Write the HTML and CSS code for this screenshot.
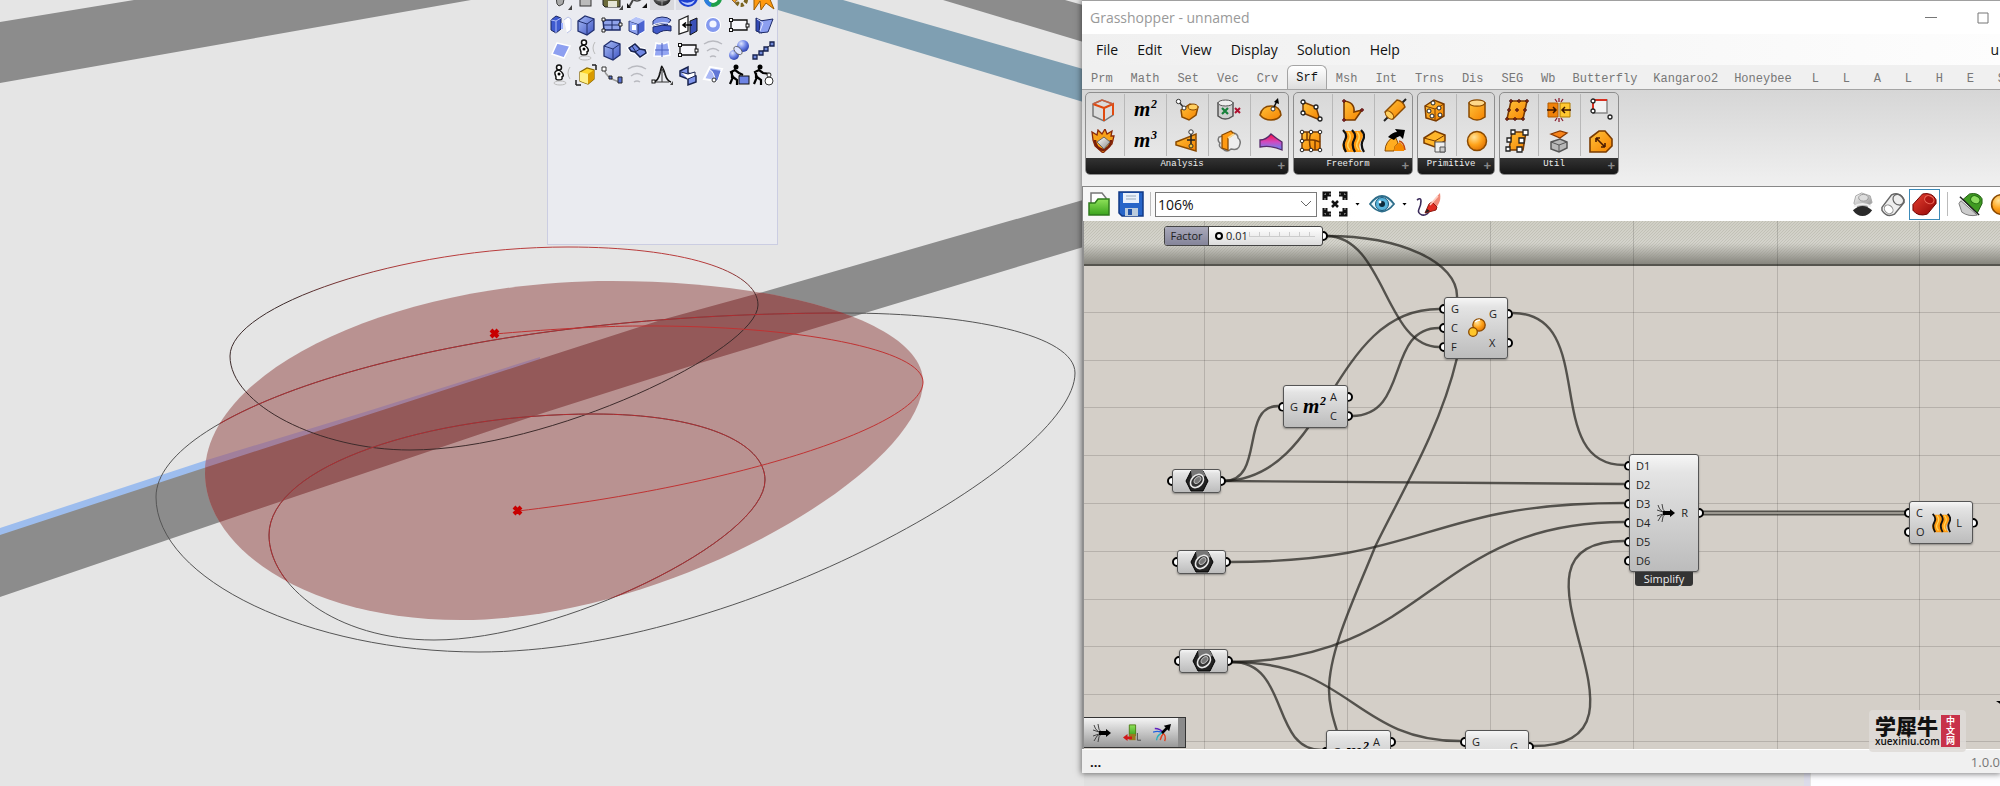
FILE: index.html
```html
<!DOCTYPE html>
<html lang="en">
<head>
<meta charset="utf-8">
<title>Grasshopper - unnamed</title>
<link rel="stylesheet" href="styles.css">
</head>
<body>
<svg class="defs" aria-hidden="true">
  <defs>
    <linearGradient id="gBlue" x1="0" y1="0" x2="1" y2="1"><stop offset="0" stop-color="#a9bdf5"/><stop offset="1" stop-color="#3f55c4"/></linearGradient>
    <linearGradient id="gOr" x1="0" y1="0" x2="1" y2="1"><stop offset="0" stop-color="#ffc23a"/><stop offset="1" stop-color="#f58200"/></linearGradient>
    <linearGradient id="gGrey" x1="0" y1="0" x2="1" y2="1"><stop offset="0" stop-color="#fff"/><stop offset="1" stop-color="#8c8c8c"/></linearGradient>
    <linearGradient id="gGreen" x1="0" y1="0" x2="0" y2="1"><stop offset="0" stop-color="#8fe25a"/><stop offset="1" stop-color="#3aa31c"/></linearGradient>
    <linearGradient id="gPink" x1="0" y1="0" x2="0" y2="1"><stop offset="0" stop-color="#ff0a3c"/><stop offset=".5" stop-color="#d04ac0"/><stop offset="1" stop-color="#5a8cf8"/></linearGradient>
    <radialGradient id="rOr" cx=".35" cy=".3" r=".8"><stop offset="0" stop-color="#ffe39a"/><stop offset=".5" stop-color="#ffa41c"/><stop offset="1" stop-color="#d96a00"/></radialGradient>
    <radialGradient id="rBlue" cx=".35" cy=".3" r=".8"><stop offset="0" stop-color="#dfe6ff"/><stop offset=".5" stop-color="#6d83e6"/><stop offset="1" stop-color="#2135a0"/></radialGradient>
    <radialGradient id="rDark" cx=".4" cy=".3" r=".8"><stop offset="0" stop-color="#aaa"/><stop offset="1" stop-color="#111"/></radialGradient>
    <linearGradient id="gRed" x1="0" y1="0" x2="1" y2="1"><stop offset="0" stop-color="#e84030"/><stop offset="1" stop-color="#8f0505"/></linearGradient>

    <symbol id="p-spot" viewBox="0 0 24 24"><path d="M6 2h11l-3 14-4 2-2-2z" fill="#aaa" stroke="#444"/><path d="M19 22h4v-5z" fill="#444"/></symbol>
    <symbol id="p-lock" viewBox="0 0 24 24"><rect x="6" y="7" width="11" height="11" fill="#bbb" stroke="#333"/></symbol>
    <symbol id="p-disk" viewBox="0 0 24 24"><path d="M3 2h17v17H5l-2-2z" fill="#6b6a3a" stroke="#222"/><rect x="8" y="13" width="9" height="6" fill="#e5e5d5"/><path d="M19 22h4v-5z" fill="#444"/></symbol>
    <symbol id="p-zoom" viewBox="0 0 24 24"><circle cx="12" cy="7" r="6" fill="#f6f6ff" stroke="#444" stroke-width="1.5"/><path d="M8 12l-4 7" stroke="#444" stroke-width="2"/><path d="M2 20h4l-4-5zM22 20h-5l5-5z" fill="#111"/></symbol>
    <symbol id="p-sphere-dark" viewBox="0 0 24 24"><rect width="24" height="22" fill="#d8d8dc"/><circle cx="12" cy="9" r="9" fill="url(#rDark)"/><path d="M3 10q9 6 18 0M12 0v18" fill="none" stroke="#999"/></symbol>
    <symbol id="p-sphere-blue" viewBox="0 0 24 24"><rect width="24" height="22" fill="#dcdde4"/><circle cx="12" cy="9" r="10" fill="#1c3fd0"/><path d="M5 13q7 4 14-1-2 5-7 5-5-1-7-4z" fill="#b5c7ff"/></symbol>
    <symbol id="p-ring" viewBox="0 0 24 24"><circle cx="12" cy="10" r="7" fill="#fff" stroke="#1fa04a" stroke-width="4"/><path d="M5 10a7 7 0 0 0 5 7" fill="none" stroke="#2e7ee0" stroke-width="4"/><path d="M19 10a7 7 0 0 0-5-7" fill="none" stroke="#2a3fd0" stroke-width="4"/></symbol>
    <symbol id="p-gear" viewBox="0 0 24 24"><circle cx="14" cy="12" r="5" fill="#eee" stroke="#7a6420" stroke-width="4" stroke-dasharray="3 2"/><path d="M2 9h9l-3 6z" fill="#f0a020" stroke="#864"/></symbol>
    <symbol id="p-arrow" viewBox="0 0 24 24"><path d="M2 4l12-1 8 4-5 2 5 12-8-6-5 7-1-9-6 9z" fill="#ff9a10" stroke="#9a5a00"/></symbol>

    <symbol id="p-split" viewBox="0 0 24 24"><path d="M2 7l5-4 5 2v11l-5 4-5-3z" fill="#3e5ad0" stroke="#1b2860"/><path d="M2 7l5 1v12M7 8l5-3" fill="none" stroke="#aebcf8"/><path d="M15 7l4-3 3 2v11l-4 3" fill="#fff" stroke="#b9c2e8"/><path d="M12 10h2v6h-2z" fill="#9cb1ff"/></symbol>
    <symbol id="p-box" viewBox="0 0 24 24"><path d="M4 8l7-5 9 3v11l-7 5-9-4z" fill="url(#gBlue)" stroke="#22306e" stroke-width="1.3"/><path d="M4 8l9 3v11M13 11l7-5" fill="none" stroke="#22306e"/></symbol>
    <symbol id="p-grid" viewBox="0 0 24 24"><path d="M3 7h17v10H4z" fill="#8fa2ea" stroke="#1d2a66" stroke-width="1.5"/><path d="M3 12h17M12 7v10" stroke="#1d2a66"/><g fill="#fff" stroke="#222"><path d="M2 5h3v3H2zM19 10h3v3h-3zM2 16h3v3H2z"/></g></symbol>
    <symbol id="p-box-face" viewBox="0 0 24 24"><path d="M4 8l7-4 9 3v11l-7 4-9-4z" fill="#4a62d0" stroke="#fff"/><path d="M4 8l9 3v11l-9-4z" fill="#8ea2ef" stroke="#22306e"/><path d="M4 8l7-4 9 3-7 4z" fill="#b5c3f8"/><rect x="7" y="12" width="4" height="5" fill="#fff"/></symbol>
    <symbol id="p-bend" viewBox="0 0 24 24"><path d="M3 8q3-4 9-4t9 3l-4 5q-7-3-14 0z" fill="#7f95ea" stroke="#1d2a66"/><path d="M3 14q9-3 18-1v5q-8-2-14 3l-4-2z" fill="#4059c8" stroke="#1d2a66"/><path d="M3 12q9-4 18-1" fill="none" stroke="#fff"/></symbol>
    <symbol id="p-door" viewBox="0 0 24 24"><path d="M3 7l9-4v15l-9 3z" fill="#fff" stroke="#222" stroke-width="1.3"/><path d="M14 8l7-3v13l-7 4z" fill="#3a50b8" stroke="#111"/><path d="M8 12h8M10 9.500l-3 2.500 3 2.500" fill="none" stroke="#000" stroke-width="1.600"/></symbol>
    <symbol id="p-ball" viewBox="0 0 24 24"><circle cx="12" cy="12" r="8" fill="#fff"/><circle cx="12" cy="12" r="7" fill="#8499ee"/><circle cx="12" cy="11" r="3.6" fill="#f4f6ff"/></symbol>
    <symbol id="p-rect" viewBox="0 0 24 24"><path d="M4 7h16v10H4z" fill="#f7f7fb" stroke="#111" stroke-width="1.3"/><g fill="#fff" stroke="#111"><rect x="2.500" y="5.500" width="3" height="3"/><rect x="19" y="11" width="3" height="3"/><rect x="2.500" y="15.500" width="3" height="3"/></g></symbol>
    <symbol id="p-planes" viewBox="0 0 24 24"><path d="M4 5l6 3v12l-6-2z" fill="#3249b5" stroke="#1d2a66"/><path d="M8 8l13-2-5 13-9 1z" fill="#8c9ff0" stroke="#1d2a66"/><path d="M5 6l6 4-3 8" fill="none" stroke="#dfe5ff"/></symbol>
    <symbol id="p-plane" viewBox="0 0 24 24"><path d="M8 5l13 3-6 12-12-4z" fill="#8d9ff0" stroke="#fff" stroke-width="1.500"/></symbol>
    <symbol id="p-figure" viewBox="0 0 24 24"><g fill="#fff" stroke="#111" stroke-width="1.500"><circle cx="10" cy="4.500" r="2.500"/><path d="M10 7q-5 1-4 4t1 3q-1 3 3 3t3-3q2-1 1-3t-4-4z"/></g><circle cx="10" cy="11" r="1.500"/><ellipse cx="11" cy="20" rx="6" ry="2" fill="none" stroke="#bbb"/><path d="M21 4q-4 6 0 12" fill="none" stroke="#bbb"/></symbol>
    <symbol id="p-surfs" viewBox="0 0 24 24"><path d="M3 10l7-4 4 4 5 1 3 4-7 4-5-4-4-1z" fill="#6c84e0" stroke="#fff" stroke-width="2.500"/><path d="M4 10l6-4 5 5 5 1 1 3-6 4-5-5-4-1z" fill="#7188e4" stroke="#18234f" stroke-width="1.500"/><path d="M10 14l5-3M7 8l4 6" stroke="#18234f"/></symbol>
    <symbol id="p-patch" viewBox="0 0 24 24"><path d="M6 5q6 2 12-1l2 13q-8 2-16 1z" fill="#94a6f2" stroke="#fff" stroke-width="1.500"/><path d="M12 5v14M5 12h14" stroke="#4c61c0"/></symbol>
    <symbol id="p-arcs" viewBox="0 0 24 24"><path d="M3 6q9-6 18 0M6 13q6-5 12 0M9 19q3-2 6 0" fill="none" stroke="#b9bac0" stroke-width="1.500"/></symbol>
    <symbol id="p-balls" viewBox="0 0 24 24"><circle cx="7" cy="17" r="5" fill="url(#rBlue)"/><circle cx="16" cy="8" r="6" fill="url(#rBlue)"/><ellipse cx="11" cy="12.500" rx="5" ry="3" transform="rotate(45 11 12.500)" fill="#dfe5ff" stroke="#555" stroke-width=".8"/></symbol>
    <symbol id="p-steps" viewBox="0 0 24 24"><path d="M3 19L21 5" stroke="#555"/><g fill="#7088d8" stroke="#18234f" stroke-width="1.300"><path d="M1 17h4v4H1zM7 13h4v4H7zM12 9h4v4h-4zM18 4h4v4h-4z"/></g></symbol>
    <symbol id="p-ybox" viewBox="0 0 24 24"><path d="M2 22v-5M2 22h5M22 2v5M22 2h-4" stroke="#222" stroke-width="1.500"/><path d="M6 9l7-4 7 2v9l-6 5-8-3z" fill="#ffd62a" stroke="#8a6a00" stroke-width="1.300"/><path d="M6 9l8 2v10l-8-3z" fill="#fff08a"/><path d="M14 11l6-4v9l-6 5z" fill="#d99a00"/></symbol>
    <symbol id="p-arcpts" viewBox="0 0 24 24"><path d="M4 6q2 9 15 13" fill="none" stroke="#999" stroke-width="1.500"/><g fill="#fff" stroke="#333"><path d="M2 4h4v4H2z"/></g><g fill="#5870d0" stroke="#222"><path d="M9 13h3v3H9zM18 14h4v6h-4z"/></g></symbol>
    <symbol id="p-peak" viewBox="0 0 24 24"><path d="M3 19q5 0 7-9t2-6q1 0 3 7t6 8" fill="none" stroke="#111" stroke-width="1.600"/><path d="M12 7v12M9 11l3-5 3 5M5 19h14" fill="none" stroke="#333"/><rect x="2" y="17" width="3" height="3" fill="#fff" stroke="#111"/><path d="M20 22h3v-4z" fill="#444"/></symbol>
    <symbol id="p-zed" viewBox="0 0 24 24"><path d="M4 8l8-4v6l8 3v6l-8 3v-6l-8-3z" fill="#7f94ea" stroke="#18234f" stroke-width="1.500"/><path d="M5 9l7 2 7-2v4l-7 3" fill="#fff" stroke="#18234f"/></symbol>
    <symbol id="p-fold" viewBox="0 0 24 24"><path d="M9 4l12 2-6 12-12-2z" fill="#aab8f5" stroke="#fff" stroke-width="2"/><path d="M8 6q6 3 6 13l3-2 3-9" fill="#6177d6" stroke="#fff"/><circle cx="13" cy="17" r="2" fill="#fff" stroke="#333"/></symbol>
    <symbol id="p-man-box" viewBox="0 0 24 24"><circle cx="9" cy="4" r="2.500"/><path d="M3 21l3-7-2-5 4-2 4 3 4 2M6 14l4 3v5M5 8v7" fill="none" stroke="#000" stroke-width="2.200"/><rect x="12" y="13" width="10" height="8" fill="#6e84e4" stroke="#111"/><path d="M12 13l3-2" stroke="#111"/></symbol>
    <symbol id="p-man-ball" viewBox="0 0 24 24"><circle cx="8" cy="4" r="2.500"/><path d="M2 21l3-7-2-5 4-2 4 3 8 1M5 14l4 3v5M4 8v7" fill="none" stroke="#000" stroke-width="2.200"/><circle cx="17" cy="18" r="4" fill="#fff" stroke="#333"/><circle cx="17" cy="12" r="2" fill="#fff" stroke="#333"/></symbol>

    <symbol id="r-frame" viewBox="0 0 24 24"><path d="M2 6l9-4 11 4v11l-9 6-11-5z" fill="#dcdcdc" stroke="#777" stroke-width="1.500"/><path d="M13 10v13M13 10l9-4v11M2 6l11 4" fill="none" stroke="#e04a10" stroke-width="2"/><path d="M2 6l9-4 11 4" fill="none" stroke="#c96040" stroke-width="1.500"/></symbol>
    <symbol id="r-flame" viewBox="0 0 24 24"><path d="M2 11L1 3l5 3 1-5 4 4 3-5 2 5 5-3-1 5 3 0-2 8-9 9-8-7z" fill="#f7a21a" stroke="#8a2a0a" stroke-width="1.300"/><path d="M4 11q0 8 8 10 8-2 8-10" fill="none" stroke="#7b1f08" stroke-width="2.500"/><path d="M6 13l7-5 6 5-6 7z" fill="url(#gGrey)" stroke="#666"/></symbol>
    <symbol id="r-m2" viewBox="0 0 28 24"><text x="3" y="18" class="glyph-m">m</text><text x="20" y="10" class="glyph-exp">2</text></symbol>
    <symbol id="r-m3" viewBox="0 0 28 24"><text x="3" y="18" class="glyph-m">m</text><text x="20" y="10" class="glyph-exp">3</text></symbol>
    <symbol id="r-eval" viewBox="0 0 24 24"><path d="M6 12l9-6 8 3-2 8-7 5-7-3z" fill="url(#gOr)" stroke="#8a4a00" stroke-width="1.500"/><ellipse cx="18" cy="9" rx="5" ry="3" fill="#ffcf60" stroke="#8a4a00"/><path d="M4 4l5 6" stroke="#333" stroke-width="1.500"/><circle cx="3.500" cy="3.500" r="2.200" fill="#fff" stroke="#333"/><circle cx="9" cy="10" r="2" fill="#fff" stroke="#333"/></symbol>
    <symbol id="r-cone" viewBox="0 0 24 24"><path d="M1 13l20-8v17L1 16z" fill="url(#gOr)" stroke="#8a4a00" stroke-width="1.500"/><path d="M16 3v13M12 11h8" stroke="#222" stroke-width="1.500"/><circle cx="16" cy="3" r="2.200" fill="#fff" stroke="#333"/><circle cx="16" cy="17" r="2" fill="#fc3" stroke="#333"/></symbol>
    <symbol id="r-cyl-x" viewBox="0 0 24 24"><path d="M1 5v13q7 6 15 0V5z" fill="#cfcfcf" stroke="#555" stroke-width="1.500"/><ellipse cx="8.500" cy="5" rx="7.500" ry="3" fill="#eee" stroke="#555"/><path d="M5 10l6 6M11 10l-6 6" stroke="#16803a" stroke-width="2.200"/><path d="M18 10l5 5M23 10l-5 5" stroke="#b01030" stroke-width="2"/></symbol>
    <symbol id="r-brep" viewBox="0 0 24 24"><path d="M2 8q-2 4 1 6-2 4 3 6 4 4 8 0 8 2 9-5 1-4-2-6 0-5-6-5z" fill="#eee" stroke="#777" stroke-width="1.500"/><path d="M5 6l9-4 3 3-6 4v12l-6-2z" fill="#ff9a12" stroke="#8a4a00" stroke-width="1.300"/><path d="M11 9l6-4" stroke="#ffd98a" stroke-width="2"/></symbol>
    <symbol id="r-dome" viewBox="0 0 24 24"><path d="M1 17q2-9 11-9t10 9q-3 5-10 5T1 17z" fill="url(#gOr)" stroke="#8a4a00" stroke-width="1.500"/><path d="M14 11l4-8" stroke="#111" stroke-width="1.500"/><path d="M19 0l1 6-5-2z"/><circle cx="14" cy="11" r="2" fill="#fff" stroke="#333"/></symbol>
    <symbol id="r-curv" viewBox="0 0 24 24"><path d="M1 11q6 0 11-6 6 5 11 8v8q-10-5-22-3z" fill="url(#gPink)" stroke="#552a6a" stroke-width="1.300"/></symbol>
    <symbol id="r-4pt" viewBox="0 0 24 24"><path d="M4 4l13 5 4 13L4 15z" fill="url(#gOr)" stroke="#7a3b00" stroke-width="1.500"/><g fill="#fff" stroke="#222" stroke-width="1.300"><circle cx="4" cy="4" r="2"/><circle cx="17" cy="9" r="2"/><circle cx="21" cy="21" r="2"/><circle cx="4" cy="15" r="2"/></g></symbol>
    <symbol id="r-sail" viewBox="0 0 24 24"><path d="M3 3q11 1 10 11l8-2-7 10H3z" fill="url(#gOr)" stroke="#7a3b00" stroke-width="1.600"/><g fill="#a33" stroke="#511"><circle cx="3" cy="3" r="1.300"/><circle cx="3" cy="22" r="1.300"/><circle cx="21" cy="12" r="1.300"/></g></symbol>
    <symbol id="r-pipe" viewBox="0 0 24 24"><path d="M1 23L23 1" stroke="#222" stroke-width="2"/><path d="M2 14L14 2q6 1 8 7L10 21q-6-1-8-7z" fill="url(#gOr)" stroke="#8a4a00" stroke-width="1.400"/><ellipse cx="6.500" cy="17" rx="3" ry="5" transform="rotate(-45 6.500 17)" fill="#ffd060" stroke="#8a4a00"/></symbol>
    <symbol id="r-net" viewBox="0 0 24 24"><path d="M3 3h18v18H3z" fill="url(#gOr)" stroke="#7a3b00" stroke-width="1.500"/><path d="M12 3q-3 9 0 18M3 12q9-3 18 1M8 3v8M16 12v9" fill="none" stroke="#7a3b00" stroke-width="1.500"/><g fill="#fff" stroke="#222"><circle cx="3" cy="3" r="1.800"/><circle cx="12" cy="3" r="1.800"/><circle cx="21" cy="3" r="1.800"/><circle cx="3" cy="21" r="1.800"/><circle cx="12" cy="21" r="1.800"/><circle cx="21" cy="21" r="1.800"/><circle cx="3" cy="12" r="1.800"/></g></symbol>
    <symbol id="r-loft" viewBox="0 0 24 24"><path d="M2 2q5 5 1 10t1 11h17q-5-5-1-11t0-10z" fill="#ff9a10"/><path d="M2 1q5 5 2 10t1 12M11 1q5 5 2 10t1 12M20 1q5 5 2 10t1 12" fill="none" stroke="#111" stroke-width="2.200"/><path d="M7 3q4 4 1 9t1 9M16 3q4 4 1 9t1 9" fill="none" stroke="#ffd65a" stroke-width="1.500"/></symbol>
    <symbol id="r-sweep" viewBox="0 0 24 24"><path d="M2 22Q2 12 12 7l3 7q-4 3-4 8z" fill="#ffad20" stroke="#8a4a00"/><path d="M11 22q0-6 6-9l5 6-1 3z" fill="#f58a00"/><path d="M5 8q5-5 9-5l-2-3 10 1-2 9-3-3q-4 1-6 4z" fill="#000"/><path d="M16 12q5 1 6 9" fill="none" stroke="#c24a10" stroke-width="1.500"/></symbol>
    <symbol id="r-dice" viewBox="0 0 24 24"><path d="M2 8l9-6 10 4v12l-8 5-10-3z" fill="url(#gOr)" stroke="#7a3b00" stroke-width="1.500"/><path d="M2 8l10 3v11M12 11l9-5" fill="none" stroke="#7a3b00"/><g fill="#fff" stroke="#222"><circle cx="10" cy="5" r="2"/><circle cx="6" cy="13" r="2"/><circle cx="16" cy="10" r="2"/><circle cx="17" cy="17" r="2"/><circle cx="9" cy="18" r="2"/></g></symbol>
    <symbol id="r-cyl" viewBox="0 0 24 24"><path d="M4 5v14q8 6 16 0V5z" fill="url(#gOr)" stroke="#8a4a00" stroke-width="1.500"/><ellipse cx="12" cy="5" rx="8" ry="3.200" fill="#ffd98a" stroke="#8a4a00" stroke-width="1.300"/></symbol>
    <symbol id="r-plane" viewBox="0 0 24 24"><path d="M1 9l11-7 10 4v6l-10 6L1 14z" fill="#ffb52a" stroke="#7a3b00" stroke-width="1.500"/><path d="M1 9l11 3 10-6M12 12v5" fill="none" stroke="#7a3b00"/><path d="M12 13h10v10H12z" fill="#eee" stroke="#555"/><path d="M17 18h5v5h-5z" fill="#ccc" stroke="#555"/></symbol>
    <symbol id="r-sphere" viewBox="0 0 24 24"><circle cx="12" cy="12" r="9.500" fill="url(#rOr)" stroke="#8a4a00" stroke-width="1.500"/></symbol>
    <symbol id="r-div" viewBox="0 0 24 24"><path d="M6 3h16l-4 18H2z" fill="url(#gOr)" stroke="#7a3b00" stroke-width="1.600"/><g fill="#b04010" stroke="#411"><circle cx="6" cy="3" r="1.300"/><circle cx="14" cy="3" r="1.300"/><circle cx="22" cy="3" r="1.300"/><circle cx="4" cy="12" r="1.300"/><circle cx="12" cy="12" r="1.300"/><circle cx="20" cy="12" r="1.300"/><circle cx="2" cy="21" r="1.300"/><circle cx="10" cy="21" r="1.300"/><circle cx="18" cy="21" r="1.300"/></g></symbol>
    <symbol id="r-frames" viewBox="0 0 24 24"><path d="M7 3h14l-3 18H4z" fill="url(#gOr)" stroke="#7a3b00" stroke-width="1.600"/><g fill="#fff" stroke="#222" stroke-width="1.300"><path d="M6 1h4v4H6zM18 1h5v5h-5zM2 9h4v4H2zM14 9h5v5h-5zM1 18h4v4H1zM12 18h5v5h-5z"/></g></symbol>
    <symbol id="r-join" viewBox="0 0 24 24"><path d="M1 5h10v14H1z" fill="#f0820a" stroke="#b05a00"/><path d="M13 5h10v14H13z" fill="#ffc832" stroke="#b07a00"/><path d="M0 12h8M24 12h-8M6 9l3 3-3 3M18 9l-3 3 3 3" fill="none" stroke="#3a1500" stroke-width="1.500"/><path d="M12 0v4M8 1l2 3M16 1l-2 3M12 24v-4M8 23l2-3M16 23l-2-3" stroke="#8a2030" stroke-width="1.300"/></symbol>
    <symbol id="r-cap" viewBox="0 0 24 24"><path d="M4 13l9-3 7 3v6l-8 4-8-3z" fill="#b8b8b8" stroke="#555" stroke-width="1.500"/><path d="M4 13l8 3v7M12 16l8-3" fill="none" stroke="#555"/><path d="M4 5l9-3 7 2-7 5z" fill="#f7841a" stroke="#8a3a00" stroke-width="1.300"/></symbol>
    <symbol id="r-edges" viewBox="0 0 24 24"><path d="M4 2h14v13H4z" fill="#f2f2f2" stroke="#888" stroke-width="1.500"/><path d="M18 2H4v12" fill="none" stroke="#d83020" stroke-width="2"/><g fill="#fff" stroke="#222" stroke-width="1.300"><circle cx="4" cy="3" r="2"/><circle cx="4" cy="13" r="2"/><circle cx="21" cy="19" r="2"/></g></symbol>
    <symbol id="r-tag" viewBox="0 0 24 24"><path d="M1 9l9-7h6l7 8v7l-6 6H1z" fill="url(#gOr)" stroke="#7a3b00" stroke-width="1.600"/><path d="M7 9l9 9M7 9v4M7 9h4M16 18v-4M16 18h-4" fill="none" stroke="#4a1a00" stroke-width="1.600"/></symbol>

    <symbol id="t-open" viewBox="0 0 24 26"><path d="M4 12V2h11l4 5v6" fill="#fff" stroke="#777" stroke-width="1.500"/><path d="M2 12h6l3-4h11v16H2z" fill="url(#gGreen)" stroke="#2f7a1c" stroke-width="1.500"/></symbol>
    <symbol id="t-save" viewBox="0 0 26 26"><path d="M1 1h24v24H4l-3-3z" fill="#2765c8" stroke="#123a85" stroke-width="1.500"/><path d="M5 2h16v10H5z" fill="#e8f0fb"/><path d="M8 5h10M8 8h10" stroke="#9ab"/><path d="M7 17h13v8H7z" fill="#bcd"/><path d="M10 18h4v6h-4z" fill="#2253a8"/></symbol>
    <symbol id="t-ext" viewBox="0 0 26 26"><path d="M3 9V3h6M17 3h6v6M23 17v6h-6M9 23H3v-6" fill="none" stroke="#111" stroke-width="5"/><path d="M3 9V3h6M17 3h6v6M23 17v6h-6M9 23H3v-6" fill="none" stroke="#aaa" stroke-width="1" stroke-dasharray="2 3"/><path d="M10 10l6 6M16 10l-6 6" stroke="#111" stroke-width="2.500"/></symbol>
    <symbol id="t-eye" viewBox="0 0 26 20"><path d="M1 10q12-16 24 0-12 15-24 0z" fill="#e9f6fb" stroke="#2d6d8a" stroke-width="1.800"/><circle cx="13" cy="10" r="6.500" fill="#58b4dc" stroke="#1b587a"/><circle cx="13" cy="10" r="3" fill="#0b2a3c"/><circle cx="11" cy="8" r="1.400" fill="#fff"/></symbol>
    <symbol id="t-pen" viewBox="0 0 26 26"><path d="M1 9q4-3 4 1t-2 8 3 6q5 1 8-5" fill="none" stroke="#3a2a5a" stroke-width="1.600"/><path d="M14 13L24 2q1 6-1 10l-4 7z" fill="#f08a78"/><path d="M9 22l4-9 3-2 5 5-1 3z" fill="#e02a20" stroke="#8f1a10"/><path d="M9 22l2-4 3 2z" fill="#222"/><path d="M14 14L22 5" stroke="#ffd0c4" stroke-width="1.500"/></symbol>
    <symbol id="t-hidden" viewBox="0 0 24 26"><path d="M3 12l2-8 6-3 9 3 2 7-6 5H8z" fill="url(#gGrey)" stroke="#aaa"/><ellipse cx="13" cy="6" rx="5" ry="3.500" fill="#ddd" stroke="#999"/><path d="M2 19q10-9 20 0-4 6-10 6T2 19z" fill="#2a2a2a"/><path d="M3 15q9-5 18 0" fill="none" stroke="#eee" stroke-width="2"/></symbol>
    <symbol id="t-wire" viewBox="0 0 26 26"><path d="M1 16L11 3q8-4 13 5v3L14 23q-8 4-13-4z" fill="#eee" stroke="#666" stroke-width="1.500"/><ellipse cx="18" cy="8" rx="5" ry="6" transform="rotate(-45 18 8)" fill="none" stroke="#666" stroke-width="1.300"/><ellipse cx="8" cy="18" rx="4" ry="5" transform="rotate(-45 8 18)" fill="#fff" stroke="#888"/></symbol>
    <symbol id="t-shade" viewBox="0 0 26 26"><path d="M1 13L11 2q10-2 14 6v4L16 23q-10 3-15-4z" fill="url(#gRed)" stroke="#6d0000"/><ellipse cx="18" cy="8" rx="5" ry="4" transform="rotate(25 18 8)" fill="#b01512" stroke="#f07060"/></symbol>
    <symbol id="t-sel" viewBox="0 0 26 26"><path d="M1 12l2-3 17 15q-9 2-16-3z" fill="#ccc" stroke="#777"/><path d="M5 8L12 2q9-2 13 5v5l-5 10z" fill="#3f9a22" stroke="#1f5a10"/><ellipse cx="18" cy="8" rx="5" ry="4" transform="rotate(25 18 8)" fill="#8cdc60" stroke="#1f6a10"/><path d="M2 5l20 19" stroke="#222" stroke-width="1.500"/></symbol>

    <symbol id="n-scale" viewBox="0 0 18 20"><circle cx="11" cy="7" r="6.200" fill="url(#rOr)" stroke="#8a4a00" stroke-width="1.300"/><circle cx="5" cy="14" r="4.300" fill="#ffc62a" stroke="#8a4a00" stroke-width="1.300"/><path d="M7 4q2-2 5-2" stroke="#fff" stroke-width="1.500" fill="none"/></symbol>
    <symbol id="n-merge" viewBox="0 0 18 18"><path d="M1 1q2 7 8 8Q3 11 1 17M0 6l9 3-9 3M5 0q0 6 4 9-4 3-4 9" fill="none" stroke="#444" stroke-width="1"/><path d="M6 7h7V5l5 4-5 4v-2H6z"/></symbol>
    <symbol id="n-hex" viewBox="0 0 24 22"><path d="M6 1h12l5 10-5 10H6L1 11z" fill="#222" stroke="#000"/><path d="M6 1h12l3 5-14 2z" fill="#777"/><ellipse cx="12" cy="11" rx="7.500" ry="5.500" transform="rotate(-45 12 11)" fill="#333" stroke="#e8e8e8" stroke-width="1.600"/><ellipse cx="12.500" cy="10" rx="4" ry="2.500" transform="rotate(-45 12.500 10)" fill="#777" stroke="#bbb"/></symbol>
    <symbol id="w-jump" viewBox="0 0 20 20"><path d="M7 1h7v12H7z" fill="url(#gGreen)" stroke="#4a7a10"/><path d="M7 11h7v7H7z" fill="#9a7a20"/><path d="M0 15l5-4v3h5v3H5v2z" fill="#d01818"/><path d="M16 10v8h4" fill="none" stroke="#444"/></symbol>
    <symbol id="w-split" viewBox="0 0 20 20"><path d="M0 9q6-2 12 1" fill="none" stroke="#2060e0" stroke-width="1.500"/><path d="M2 5q6 0 10 5" fill="none" stroke="#6020c0" stroke-width="1.500"/><path d="M4 18q0-6 8-9" fill="none" stroke="#20b0c0" stroke-width="1.500"/><path d="M13 19q2-6-2-9M8 18q1-5 4-8" fill="none" stroke="#e04020" stroke-width="1.500"/><path d="M9 9l5-5-2-2 8-2-2 8-2-2-5 5z"/></symbol>
  </defs>
</svg>

<main class="desktop">
  <svg class="scene" aria-label="Perspective viewport" role="img">
    <defs>
      <path id="disc" d="M205 473C205 368 400 281 611 281C790 281 923 325 923 382C923 470 670 620 461 620C310 620 205 550 205 473Z"/>
      <path id="outer" d="M156 497C156 410 440 313 843 313C970 313 1075 335 1075 373C1075 460 740 652 479 652C310 652 156 580 156 497Z"/>
      <path id="lower" d="M269 535C269 465 430 414 594 414C700 414 765 442 765 480C765 540 560 640 434 640C335 640 269 585 269 535Z"/>
      <clipPath id="inDisc"><use href="#disc"/></clipPath>
      <linearGradient id="fade" gradientUnits="userSpaceOnUse" x1="0" y1="262" x2="0" y2="300"><stop offset="0" stop-color="#b83c3c"/><stop offset="1" stop-color="#3c2a2a"/></linearGradient>
    </defs>
    <path d="M0 22L134 0H471L0 83Z" fill="#8c8c8c"/>
    <path d="M740 0H843L1090 71V104L778 10Z" fill="#7f9fb2"/>
    <path d="M943 0H1065L1090 7V44Z" fill="#8c8c8c"/>
    <path d="M0 528L207 460L365 412L540 357V360L207 468L0 536Z" fill="#9dbdee"/>
    <path d="M0 535L207 467L540 359L661 320L763 292L943 240L1090 198V245L865 313L697 364L540 414L217 523L0 597Z" fill="#8c8c8c"/>
    <use href="#disc" fill="#b99291"/>
    <g clip-path="url(#inDisc)">
      <path d="M0 528L207 460L365 412L540 357V360L207 468L0 536Z" fill="#a17f9c"/>
      <path d="M0 535L207 467L540 359L661 320L763 292L943 240L1090 198V245L865 313L697 364L540 414L217 523L0 597Z" fill="#945959"/>
    </g>
    <g fill="none">
      <path d="M230 356C230 306 400 247 568 247C680 247 758 270 758 305C758 350 550 450 410 450C320 450 230 405 230 356Z" stroke="url(#fade)"/>
      <use href="#outer" stroke="#555"/>
      <use href="#lower" stroke="#555"/>
      <g clip-path="url(#inDisc)" stroke="#b02c30"><use href="#outer"/><use href="#lower"/></g>
      <path d="M495 334C540 330 600 326 640 326C800 325 923 350 923 382C923 425 740 485 518 511" stroke="#c03232"/>
      <path d="M491 330l7 7m0-7l-7 7M514 507l7 7m0-7l-7 7" stroke="#c80000" stroke-width="4"/>
    </g>
    <path d="M1084 773H1804V786H1084Z" fill="#e0e0e0"/>
    <path d="M1804 773H1810V786H1804Z" fill="#dcdcea"/>
    <path d="M1811 773H2400V786H1811Z" fill="#fdfdff"/>
  </svg>

  <section class="palette" aria-label="Modeling tools">
    <div class="palette-grid">
      <button type="button" aria-label="Spotlight"><svg><use href="#p-spot"/></svg></button>
      <button type="button" aria-label="Lock"><svg><use href="#p-lock"/></svg></button>
      <button type="button" aria-label="Save"><svg><use href="#p-disk"/></svg></button>
      <button type="button" aria-label="Zoom"><svg><use href="#p-zoom"/></svg></button>
      <button type="button" aria-label="Wireframe"><svg><use href="#p-sphere-dark"/></svg></button>
      <button type="button" aria-label="Shaded"><svg><use href="#p-sphere-blue"/></svg></button>
      <button type="button" aria-label="Color wheel"><svg><use href="#p-ring"/></svg></button>
      <button type="button" aria-label="Options"><svg><use href="#p-gear"/></svg></button>
      <button type="button" aria-label="Explode"><svg><use href="#p-arrow"/></svg></button>
      <button type="button" aria-label="Split solid"><svg><use href="#p-split"/></svg></button>
      <button type="button" aria-label="Box"><svg><use href="#p-box"/></svg></button>
      <button type="button" aria-label="Surface grid"><svg><use href="#p-grid"/></svg></button>
      <button type="button" aria-label="Extract face"><svg><use href="#p-box-face"/></svg></button>
      <button type="button" aria-label="Bend"><svg><use href="#p-bend"/></svg></button>
      <button type="button" aria-label="Move face"><svg><use href="#p-door"/></svg></button>
      <button type="button" aria-label="Sphere"><svg><use href="#p-ball"/></svg></button>
      <button type="button" aria-label="Rectangle"><svg><use href="#p-rect"/></svg></button>
      <button type="button" aria-label="Planes"><svg><use href="#p-planes"/></svg></button>
      <button type="button" aria-label="Plane"><svg><use href="#p-plane"/></svg></button>
      <button type="button" aria-label="Rotate figure"><svg><use href="#p-figure"/></svg></button>
      <button type="button" aria-label="Solid box"><svg><use href="#p-box"/></svg></button>
      <button type="button" aria-label="Surfaces"><svg><use href="#p-surfs"/></svg></button>
      <button type="button" aria-label="Patch"><svg><use href="#p-patch"/></svg></button>
      <button type="button" aria-label="Corner rectangle"><svg><use href="#p-rect"/></svg></button>
      <button type="button" aria-label="Arcs"><svg><use href="#p-arcs"/></svg></button>
      <button type="button" aria-label="Scale spheres"><svg><use href="#p-balls"/></svg></button>
      <button type="button" aria-label="Points"><svg><use href="#p-steps"/></svg></button>
      <button type="button" aria-label="Orient figure"><svg><use href="#p-figure"/></svg></button>
      <button type="button" aria-label="Bounding box"><svg><use href="#p-ybox"/></svg></button>
      <button type="button" aria-label="Arc points"><svg><use href="#p-arcpts"/></svg></button>
      <button type="button" aria-label="Arc array"><svg><use href="#p-arcs"/></svg></button>
      <button type="button" aria-label="Curve peak"><svg><use href="#p-peak"/></svg></button>
      <button type="button" aria-label="Fold planes"><svg><use href="#p-zed"/></svg></button>
      <button type="button" aria-label="Flow"><svg><use href="#p-fold"/></svg></button>
      <button type="button" aria-label="Push box"><svg><use href="#p-man-box"/></svg></button>
      <button type="button" aria-label="Push sphere"><svg><use href="#p-man-ball"/></svg></button>
    </div>
  </section>

  <section class="window" aria-label="Grasshopper">
    <header class="titlebar">
      <h1>Grasshopper - unnamed</h1>
      <div class="caption">
        <button type="button" aria-label="Minimize"><svg viewBox="0 0 12 12"><path d="M0 5.500h12"/></svg></button>
        <button type="button" aria-label="Maximize"><svg viewBox="0 0 12 12"><path d="M1 1h10v10H1z"/></svg></button>
      </div>
    </header>
    <nav class="menubar">
      <a href="#">File</a><a href="#">Edit</a><a href="#">View</a><a href="#">Display</a><a href="#">Solution</a><a href="#">Help</a>
      <a class="doc" href="#">u</a>
    </nav>
    <nav class="tabs">
      <button type="button">Prm</button><button type="button">Math</button><button type="button">Set</button><button type="button">Vec</button><button type="button">Crv</button><button type="button" class="active">Srf</button><button type="button">Msh</button><button type="button">Int</button><button type="button">Trns</button><button type="button">Dis</button><button type="button">SEG</button><button type="button">Wb</button><button type="button" class="long">Butterfly</button><button type="button" class="long">Kangaroo2</button><button type="button" class="long">Honeybee</button><button type="button">L</button><button type="button">L</button><button type="button">A</button><button type="button">L</button><button type="button">H</button><button type="button">E</button><button type="button">S</button>
    </nav>
    <div class="ribbon">
      <section class="group">
        <div class="tools">
          <button type="button" aria-label="Box corners"><svg><use href="#r-frame"/></svg></button>
          <button type="button" aria-label="Brep closest point"><svg><use href="#r-flame"/></svg></button>
          <button type="button" aria-label="Area"><svg class="wide"><use href="#r-m2"/></svg></button>
          <button type="button" aria-label="Volume"><svg class="wide"><use href="#r-m3"/></svg></button>
          <button type="button" aria-label="Evaluate surface"><svg><use href="#r-eval"/></svg></button>
          <button type="button" aria-label="Osculating circles"><svg><use href="#r-cone"/></svg></button>
          <button type="button" aria-label="Point in Brep"><svg><use href="#r-cyl-x"/></svg></button>
          <button type="button" aria-label="Deconstruct Brep"><svg><use href="#r-brep"/></svg></button>
          <button type="button" aria-label="Surface closest point"><svg><use href="#r-dome"/></svg></button>
          <button type="button" aria-label="Surface curvature"><svg><use href="#r-curv"/></svg></button>
        </div>
        <h2>Analysis<span>+</span></h2>
      </section>
      <section class="group">
        <div class="tools">
          <button type="button" aria-label="4Point surface"><svg><use href="#r-4pt"/></svg></button>
          <button type="button" aria-label="Network surface"><svg><use href="#r-net"/></svg></button>
          <button type="button" aria-label="Edge surface"><svg><use href="#r-sail"/></svg></button>
          <button type="button" aria-label="Loft"><svg><use href="#r-loft"/></svg></button>
          <button type="button" aria-label="Pipe"><svg><use href="#r-pipe"/></svg></button>
          <button type="button" aria-label="Sweep"><svg><use href="#r-sweep"/></svg></button>
        </div>
        <h2>Freeform<span>+</span></h2>
      </section>
      <section class="group">
        <div class="tools">
          <button type="button" aria-label="Bounding box"><svg><use href="#r-dice"/></svg></button>
          <button type="button" aria-label="Plane surface"><svg><use href="#r-plane"/></svg></button>
          <button type="button" aria-label="Cylinder"><svg><use href="#r-cyl"/></svg></button>
          <button type="button" aria-label="Sphere"><svg><use href="#r-sphere"/></svg></button>
        </div>
        <h2>Primitive<span>+</span></h2>
      </section>
      <section class="group">
        <div class="tools">
          <button type="button" aria-label="Divide surface"><svg><use href="#r-div"/></svg></button>
          <button type="button" aria-label="Surface frames"><svg><use href="#r-frames"/></svg></button>
          <button type="button" aria-label="Brep join"><svg><use href="#r-join"/></svg></button>
          <button type="button" aria-label="Cap holes"><svg><use href="#r-cap"/></svg></button>
          <button type="button" aria-label="Closed edges"><svg><use href="#r-edges"/></svg></button>
          <button type="button" aria-label="Offset surface"><svg><use href="#r-tag"/></svg></button>
        </div>
        <h2>Util<span>+</span></h2>
      </section>
    </div>
    <div class="toolbar">
      <button type="button" aria-label="Open"><svg><use href="#t-open"/></svg></button>
      <button type="button" aria-label="Save"><svg><use href="#t-save"/></svg></button>
      <i class="sep"></i>
      <select aria-label="Zoom"><option>106%</option></select>
      <button type="button" aria-label="Zoom extents"><svg><use href="#t-ext"/></svg></button>
      <b class="drop"></b>
      <button type="button" aria-label="Preview"><svg><use href="#t-eye"/></svg></button>
      <b class="drop"></b>
      <button type="button" aria-label="Sketch"><svg><use href="#t-pen"/></svg></button>
      <div class="display">
        <button type="button" aria-label="No preview"><svg><use href="#t-hidden"/></svg></button>
        <button type="button" aria-label="Wireframe preview"><svg><use href="#t-wire"/></svg></button>
        <button type="button" class="on" aria-label="Shaded preview"><svg><use href="#t-shade"/></svg></button>
        <i class="sep"></i>
        <button type="button" aria-label="Selected only"><svg><use href="#t-sel"/></svg></button>
        <button type="button" aria-label="Preview quality"><svg><use href="#r-sphere"/></svg></button>
      </div>
    </div>

    <div class="canvas">
      <svg class="wires" aria-hidden="true">
        <defs>
          <pattern id="hatch" width="3" height="3" patternUnits="userSpaceOnUse"><path d="M0 3L3 0" stroke="#8c8b7e" stroke-width=".6" opacity=".4"/></pattern>
          <linearGradient id="edge" x1="0" y1="0" x2="0" y2="1"><stop offset="0" stop-color="#d0cfc5"/><stop offset=".5" stop-color="#d4d3cc"/><stop offset="1" stop-color="#83827b"/></linearGradient>
        </defs>
        <rect width="100%" height="44" fill="url(#edge)"/>
        <rect width="100%" height="44" fill="url(#hatch)"/>
        <rect y="43" width="100%" height="2" fill="#56554f"/>
        <g stroke="#000" stroke-opacity=".14">
          <path d="M122.500 0V540M265.500 0V540M408.500 0V540M551.500 0V540M695.500 0V540M837.500 0V540"/>
          <path d="M0 91.500H1400M0 139.500H1400M0 186.500H1400M0 234.500H1400M0 282.500H1400M0 330.500H1400M0 378.500H1400M0 425.500H1400M0 473.500H1400M0 520.500H1400"/>
        </g>
        <g transform="translate(-1082 -221)" fill="none" stroke="#1e1c18" stroke-opacity=".7" stroke-width="2.400">
          <path d="M1327 236C1385 237 1385 347 1439 347"/>
          <path d="M1327 236C1400 236 1458 262 1457 297V358C1440 430 1400 495 1375 547C1355 597 1329 650 1329 690C1329 705 1333 718 1337 731"/>
          <path d="M1224 481C1330 478 1330 309 1439 309"/>
          <path d="M1224 481C1265 481 1240 406 1278 406"/>
          <path d="M1352 416C1410 416 1385 328 1439 328"/>
          <path d="M1224 481L1624 484"/>
          <path d="M1230 562C1430 562 1425 503 1624 503"/>
          <path d="M1232 662C1430 660 1430 522 1624 522"/>
          <path d="M1232 662C1350 662 1355 741 1460 741"/>
          <path d="M1232 662C1290 662 1270 750 1322 750"/>
          <path d="M1513 313C1600 314 1540 465 1624 465"/>
          <path d="M1533 746C1680 746 1480 541 1624 541"/>
          <path d="M1703 513H1905" stroke-width="5"/>
          <path d="M1703 513H1905" stroke="#9a978f" stroke-opacity="1" stroke-width="2"/>
        </g>
        <path d="M914 480h20v14z"/>
      </svg>

      <div class="slider">
        <label for="factor">Factor</label>
        <div class="track"><input id="factor" type="range" min="0" max="1" step="0.01" value="0"><output for="factor">0.01</output></div>
      </div>

      <div class="node scale">
        <ul class="in"><li>G</li><li>C</li><li>F</li></ul>
        <svg><use href="#n-scale"/></svg>
        <ul class="out"><li>G</li><li>X</li></ul>
      </div>
      <div class="node area">
        <ul class="in"><li>G</li></ul>
        <svg class="wide"><use href="#r-m2"/></svg>
        <ul class="out"><li>A</li><li>C</li></ul>
      </div>
      <div class="node param first"><ul class="in"><li></li></ul><svg><use href="#n-hex"/></svg><ul class="out"><li></li></ul></div>
      <div class="node param second"><ul class="in"><li></li></ul><svg><use href="#n-hex"/></svg><ul class="out"><li></li></ul></div>
      <div class="node param third"><ul class="in"><li></li></ul><svg><use href="#n-hex"/></svg><ul class="out"><li></li></ul></div>
      <div class="node merge">
        <ul class="in"><li>D1</li><li>D2</li><li>D3</li><li>D4</li><li>D5</li><li>D6</li></ul>
        <svg><use href="#n-merge"/></svg>
        <ul class="out"><li>R</li></ul>
        <span class="flag">Simplify</span>
      </div>
      <div class="node loft">
        <ul class="in"><li>C</li><li>O</li></ul>
        <svg><use href="#r-loft"/></svg>
        <ul class="out"><li>L</li></ul>
      </div>
      <div class="node area area-low">
        <ul class="in"><li>G</li></ul>
        <svg class="wide"><use href="#r-m2"/></svg>
        <ul class="out"><li>A</li></ul>
      </div>
      <div class="node scale scale-low">
        <ul class="in"><li>G</li></ul>
        <ul class="out"><li>G</li></ul>
      </div>

      <div class="widget">
        <button type="button" aria-label="Merge wires"><svg><use href="#n-merge"/></svg></button>
        <button type="button" aria-label="Jump"><svg><use href="#w-jump"/></svg></button>
        <button type="button" aria-label="Split wires"><svg><use href="#w-split"/></svg></button>
      </div>
    </div>
    <footer class="status"><span class="msg">...</span><span class="version">1.0.0</span></footer>
  </section>

  <aside class="mark">
    <div class="mark-name"><strong>学犀牛</strong><span>xuexiniu.com</span></div>
    <div class="mark-seal"><span>中</span><span>文</span><span>网</span></div>
  </aside>
</main>
</body>
</html>
```

FILE: styles.css
```css
*, *::before, *::after { box-sizing: border-box; }
body { margin: 0; font-family: "Open Sans", "Noto Sans", sans-serif; color: #111; }
button { margin: 0; padding: 0; border: 0; background: none; font: inherit; color: inherit; }
ul, h1, h2 { margin: 0; padding: 0; list-style: none; font-weight: 400; }
a { color: inherit; text-decoration: none; }
svg { display: block; }
.defs { position: absolute; width: 0; height: 0; }

.desktop { position: relative; height: 100vh; min-height: 600px; overflow: hidden; background: #e5e5e5; }
.scene { position: absolute; inset: 0; width: 100%; height: 100%; }

/* floating tool palette */
.palette { position: absolute; left: 547px; top: 0; width: 231px; height: 245px; overflow: hidden; background: #eaebf0; border: 1px solid #cbcde2; border-top: 0; }
.palette-grid { display: grid; grid-template-columns: repeat(9, 1fr); grid-auto-rows: 25px; margin-top: -13px; }
.palette-grid button { display: grid; place-items: center; }
.palette-grid svg { width: 24px; height: 24px; }

/* application window */
.window { position: absolute; left: 1082px; right: 0; top: 0; bottom: 13px; display: flex; flex-direction: column; background: #f0f0f0; border-top: 1px solid #a0a0a0; box-shadow: 0 0 6px 1px rgba(0, 0, 0, .5); }
.titlebar { display: flex; align-items: center; height: 33px; padding-left: 8px; background: #fff; overflow: hidden; }
.titlebar h1 { flex: 1; font-size: 14px; color: #999; }
.caption { display: flex; margin-right: -9px; }
.caption button { width: 52px; height: 33px; display: grid; place-items: center; }
.caption svg { width: 12px; height: 12px; fill: none; stroke: #777; }

.menubar { display: flex; align-items: center; gap: 19px; height: 31px; padding: 0 1px 0 14px; font-size: 14px; background: linear-gradient(90deg, #f0f0f0, #fdfdfd); }
.menubar .doc { margin-left: auto; }

.tabs { display: flex; align-items: stretch; height: 25px; background: #f0f0f0; border-bottom: 1px solid #a4a4a4; overflow: hidden; font: 12px "Liberation Mono", monospace; color: #777; }
.tabs button { flex: none; min-width: 31px; padding: 3px 9px 0; }
.tabs .long { padding: 3px 8px 0; }
.tabs .active { background: linear-gradient(#fff, #ddd); border: 1px solid #a4a4a4; border-bottom: 0; border-radius: 6px 6px 0 0; padding: 0 8px; color: #111; }

.ribbon { display: flex; align-items: flex-start; gap: 4px; height: 97px; padding: 2px 3px; background: linear-gradient(#d6d6d6, #f0f0f0); border-bottom: 1px solid #888; }
.group { border: 1px solid #8e8e8e; border-radius: 5px; background: linear-gradient(#d8d8d8, #ececec); overflow: hidden; }
.tools { display: grid; grid-auto-flow: column; grid-template-rows: 31px 31px; grid-auto-columns: 34px; column-gap: 8px; padding: 1px 0 2px; }
.tools button { position: relative; display: grid; place-items: center; }
.tools button:nth-child(n+3)::before { content: ""; position: absolute; left: -4px; top: 0; bottom: 0; width: 1px; background: #b8b8b8; }
.tools svg { width: 24px; height: 24px; }
.tools svg.wide { width: 28px; height: 24px; }
.glyph-m { font: italic 900 21px "Liberation Serif", serif; }
.glyph-exp { font: italic 700 12px "Liberation Serif", serif; }
.group h2 { position: relative; height: 16px; padding-right: 10px; background: linear-gradient(#333, #161616); color: #eee; text-align: center; font: 9px/12px "Liberation Mono", monospace; }
.group h2 span { position: absolute; right: 3px; top: 1px; font: 700 13px/13px "Liberation Sans", sans-serif; color: #888; }

.toolbar { display: flex; align-items: center; height: 34px; padding-left: 3px; background: linear-gradient(90deg, #f6f6f6, #fff 30%); border-left: 1px solid #888; overflow: hidden; }
.toolbar > button { flex: none; width: 32px; height: 30px; display: grid; place-items: center start; }
.toolbar > button svg { width: 26px; height: 26px; }
.toolbar .sep { width: 1px; height: 24px; background: #bbb; margin-right: 4px; }
.toolbar select { width: 162px; height: 25px; margin-right: 5px; padding: 0 2px; border: 1px solid #7a7a7a; border-radius: 0; font: 14px "Open Sans", sans-serif; color: #111; appearance: none; background: linear-gradient(45deg, transparent 50%, #666 50%, #666 60%, transparent 60%) 145px 8px / 5px 5px no-repeat, linear-gradient(-45deg, transparent 50%, #666 50%, #666 60%, transparent 60%) 150px 8px / 5px 5px no-repeat, #fff; }
.drop { width: 5px; height: 3px; margin: 0 9px 0 1px; background: #000; clip-path: polygon(0 0, 100% 0, 50% 100%); }
.display { display: flex; align-items: center; margin-left: auto; margin-right: -17px; }
.display button { width: 31px; height: 31px; display: grid; place-items: center; border: 1px solid transparent; }
.display .on { border-color: #3c8ab8; background: #fff; }
.display svg { width: 25px; height: 25px; }
.display .sep { margin: 0 7px; }

/* node canvas */
.canvas { position: relative; flex: 1; min-height: 0; overflow: hidden; background: #d4cfc8; border-bottom: 1px solid #fff; font-size: 11px; line-height: 14px; color: #222; }
.canvas::after { content: ""; position: absolute; left: 0; top: 0; bottom: 0; width: 2px; background: #8f8f8f; }
.wires { position: absolute; inset: 0; width: 100%; height: 100%; }
.slider { position: absolute; left: 82px; top: 5px; width: 159px; height: 20px; display: flex; border: 1px solid #444; border-radius: 3px; background: linear-gradient(#fff, #ddd); }
.slider label { width: 44px; border-right: 1px solid #444; border-radius: 2px 0 0 2px; background: linear-gradient(#a9a9ba, #85859a); text-align: center; line-height: 18px; }
.track { flex: 1; display: grid; align-items: center; }
.track > * { grid-area: 1 / 1; }
.track input { width: 104px; height: 12px; margin: 0 0 0 6px; appearance: none; background: repeating-linear-gradient(90deg, #ccc 0 1px, transparent 1px 10px) 34px 2px / 66px 4px no-repeat, linear-gradient(#ccc, #ccc) 34px 6px / 66px 1px no-repeat; }
.track input::-webkit-slider-thumb { appearance: none; width: 8px; height: 8px; border: 2px solid #000; border-radius: 50%; background: #fff; }
.track output { margin-left: 17px; pointer-events: none; }

/* connection grips: full circles, cut in half where they meet the node */
.slider::after, .node li::before { content: ""; position: absolute; width: 10px; height: 10px; border: 2px solid #000; border-radius: 50%; background: #fff; }
.slider::after { right: -6px; top: 4px; clip-path: inset(0 0 0 5px); }

.node { position: absolute; display: flex; justify-content: space-between; align-items: center; border: 1px solid #555; border-radius: 3px; background: linear-gradient(#f6f6f6, #e4e4e4 15%, #bcbcbc); box-shadow: 0 1px 2px rgba(0, 0, 0, .35); }
.node ul { align-self: stretch; display: flex; flex-direction: column; padding: 1px 0; }
.node li { position: relative; flex: 1; display: flex; align-items: center; padding: 0 6px; }
.node li::before { top: calc(50% - 5px); }
.node .in li::before { left: -6px; clip-path: inset(0 5px 0 0); }
.node .out li { padding: 0 10px 0 0; }
.node .out li::before { right: -6px; clip-path: inset(0 0 0 5px); }
.node svg { width: 18px; height: 20px; }
.node svg.wide { width: 28px; height: 24px; }
.scale { left: 362px; top: 76px; width: 64px; height: 62px; }
.area { left: 201px; top: 164px; width: 65px; height: 43px; }
.node.area .in li { padding-right: 0; }
.param { width: 49px; height: 24px; }
.node.param li { padding: 0; }
.node.param svg { width: 24px; height: 22px; }
.first { left: 90px; top: 248px; }
.second { left: 95px; top: 329px; }
.third { left: 97px; top: 428px; }
.merge { left: 547px; top: 233px; width: 70px; height: 118px; }
.merge .in li { padding-right: 0; }
.flag { position: absolute; left: 5px; right: 5px; top: 117px; height: 14px; border-radius: 0 0 3px 3px; background: #333; color: #eee; text-align: center; line-height: 13px; }
.loft { left: 827px; top: 280px; width: 64px; height: 43px; }
.node.loft .in li { padding-right: 2px; }
.node.loft svg { width: 20px; height: 20px; }
.area-low { left: 244px; top: 509px; }
.area-low .out li { flex: none; height: 20px; }
.scale-low { left: 383px; top: 509px; }
.scale-low .in li { flex: none; height: 20px; }
.scale-low .out li { flex: none; height: 29px; }

.widget { position: absolute; left: 0; bottom: 1px; width: 104px; height: 31px; display: flex; align-items: center; gap: 12px; padding-left: 10px; border: 1px solid #333; background: linear-gradient(#f4f4f4, #999); box-shadow: inset -7px 0 #8b8b8b; }
.widget svg { width: 18px; height: 18px; }

.status { display: flex; justify-content: space-between; align-items: center; height: 23px; padding: 0 0 0 8px; background: #f0f0f0; font-size: 13px; }
.status .msg { font-weight: 700; }
.status .version { color: #777; }

.mark { position: absolute; right: 34px; bottom: 34px; display: flex; gap: 3px; padding: 5px 6px; border-radius: 4px; background: rgba(222, 219, 215, .85); }
.mark-name { display: flex; flex-direction: column; width: 63px; }
.mark-name strong { font: 900 21px/21px "Noto Sans CJK SC", sans-serif; }
.mark-name span { font: 600 10px/11px "Open Sans", sans-serif; }
.mark-seal { display: flex; flex-direction: column; align-items: center; justify-content: center; width: 19px; background: #c8324a; color: #fff; font: 700 9px/10px "Noto Sans CJK SC", sans-serif; }
```
